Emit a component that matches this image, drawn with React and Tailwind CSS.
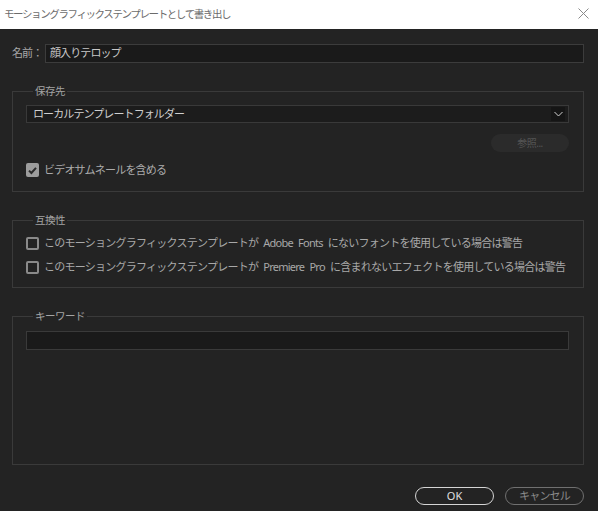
import React from "react";

const font = "font-['Noto_Sans','Noto_Sans_CJK_JP',sans-serif]";

function Legend({ children }) {
  return (
    <div className="-mt-[9px] ml-[7px] flex h-[16px] w-fit items-center bg-[#232323] px-[2px] text-[10.5px] leading-[16px] tracking-[-0.5px] text-[#a4a4a4]">
      {children}
    </div>
  );
}

function Checkbox({ checked }) {
  if (checked) {
    return (
      <div className="flex h-[14px] w-[13px] shrink-0 items-center justify-center rounded-[2px] bg-[#9c9c9c]">
        <svg width="11" height="11" viewBox="0 0 11 11">
          <path d="M2 5.6 L4.4 8 L9 2.8" fill="none" stroke="#2a2a2a" strokeWidth="2" />
        </svg>
      </div>
    );
  }
  return <div className="h-[13px] w-[13px] shrink-0 rounded-[2px] border-2 border-[#8a8a8a]" />;
}

export default function App() {
  return (
    <div className={`${font} flex h-[511px] w-[598px] flex-col bg-[#232323]`}>
      {/* Title bar */}
      <div className="flex h-[29px] shrink-0 items-center justify-between bg-white pl-[4px] pr-[8px]">
        <span className="text-[10.5px] tracking-[-1.4px] text-[#6c6c6c]">
          モーショングラフィックステンプレートとして書き出し
        </span>
        <svg width="11" height="11" viewBox="0 0 11 11" className="mr-[1px] mt-[-3px]">
          <path d="M0.5 0.5 L10.5 10.5 M10.5 0.5 L0.5 10.5" stroke="#8a8a8a" strokeWidth="1" />
        </svg>
      </div>

      <div className="flex flex-1 flex-col pl-[12px] pr-[14px]">
        {/* Name row */}
        <div className="mt-[15px] flex h-[19px] items-center">
          <span className="w-[33px] shrink-0 text-[11px] tracking-[-0.9px] text-[#a8a8a8]">名前：</span>
          <div className="flex h-[19px] flex-1 items-center border border-[#3c3c3c] bg-[#1a1a1a] pl-[4px] text-[11px] tracking-[-0.9px] text-[#c8c8c8]">
            顔入りテロップ
          </div>
        </div>

        {/* 保存先 */}
        <div className="mt-[28px] flex flex-col border border-[#3a3a3a] pb-[14px] pl-[13px] pr-[14px]">
          <Legend>保存先</Legend>
          <div className="mt-[6px] flex h-[18px] items-center justify-between border border-[#393939] bg-[#1c1c1c] pl-[6px] pr-[3px] text-[11px] tracking-[-0.9px] text-[#cfcfcf]">
            <span>ローカルテンプレートフォルダー</span>
            <div className="flex h-[14px] w-[14px] items-center justify-center bg-[#151515]">
              <svg width="9" height="6" viewBox="0 0 9 6">
                <path d="M0.5 1 L4.5 5 L8.5 1" fill="none" stroke="#d0d0d0" strokeWidth="1" />
              </svg>
            </div>
          </div>
          <div className="mt-[11px] flex justify-end">
            <div className="flex h-[18px] w-[78px] items-center justify-center rounded-full bg-[#2b2b2b] text-[10px] tracking-[-0.5px] text-[#555555]">
              参照...
            </div>
          </div>
          <div className="mt-[11px] flex h-[14px] items-center gap-[5px]">
            <Checkbox checked />
            <span className="text-[11px] tracking-[-0.8px] text-[#ababab]">ビデオサムネールを含める</span>
          </div>
        </div>

        {/* 互換性 */}
        <div className="mt-[28px] flex flex-col border border-[#3a3a3a] pb-[11px] pl-[13px] pr-[14px]">
          <Legend>互換性</Legend>
          <div className="mt-[6px] flex h-[18px] items-center gap-[5px]">
            <Checkbox />
            <span className="whitespace-nowrap text-[11px] tracking-[-0.75px] [word-spacing:3px] text-[#a8a8a8]">
              このモーショングラフィックステンプレートが Adobe Fonts にないフォントを使用している場合は警告
            </span>
          </div>
          <div className="mt-[6px] flex h-[18px] items-center gap-[5px]">
            <Checkbox />
            <span className="whitespace-nowrap text-[11px] tracking-[-0.75px] [word-spacing:3px] text-[#a8a8a8]">
              このモーショングラフィックステンプレートが Premiere Pro に含まれないエフェクトを使用している場合は警告
            </span>
          </div>
        </div>

        {/* キーワード */}
        <div className="mt-[28px] flex flex-col border border-[#3a3a3a] pb-[114px] pl-[13px] pr-[14px]">
          <Legend>キーワード</Legend>
          <div className="mt-[7px] h-[19px] border border-[#3a3a3a] bg-[#1a1a1a]" />
        </div>

        {/* Buttons */}
        <div className="mt-[22px] flex justify-end gap-[11px]">
          <div className="flex h-[18px] w-[79px] items-center justify-center rounded-full border border-[#d4d4d4] text-[11px] text-[#e0e0e0]">
            OK
          </div>
          <div className="flex h-[18px] w-[79px] items-center justify-center rounded-full border border-[#707070] text-[11px] tracking-[-0.8px] text-[#8a8a8a]">
            キャンセル
          </div>
        </div>
      </div>
    </div>
  );
}
